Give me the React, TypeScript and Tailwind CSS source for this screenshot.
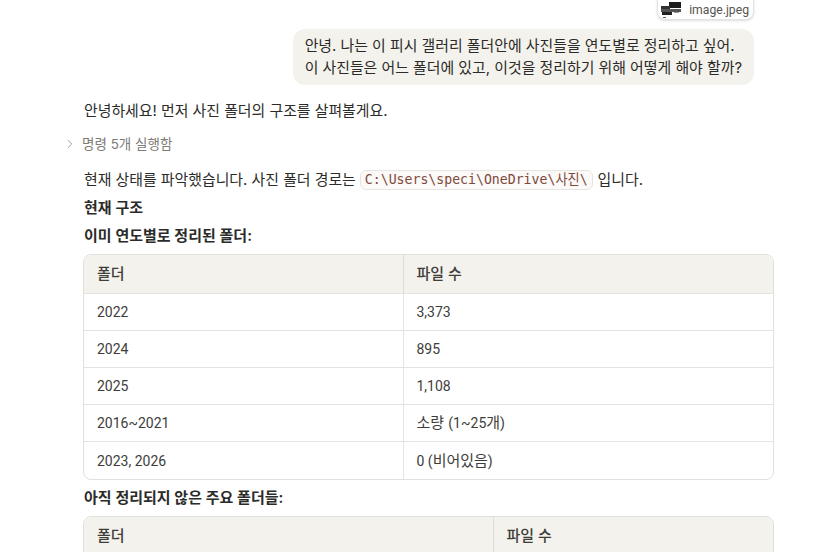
import React from 'react';
import { ChevronRight } from 'lucide-react';

const fontSans = 'font-["Inter","Noto_Sans_CJK_KR",sans-serif]';

// numbers in the reference run narrower than the hangul next to them
const Num: React.FC<{ children: React.ReactNode }> = ({ children }) => (
  <span className="font-['Roboto'] text-[14px]">{children}</span>
);

const FolderTable: React.FC<{ rows: React.ReactNode[][]; firstCol: string }> = ({ rows, firstCol }) => (
  <div className="rounded-lg border border-[#e1e0dc] overflow-hidden">
    <table className="w-full border-collapse table-fixed text-[15px] leading-[20px]">
      <colgroup>
        <col className={firstCol} />
        <col />
      </colgroup>
      <thead>
        <tr className="h-[38px] bg-[#f4f2ec] text-[#3d3d3a]">
          <th className="pl-[13px] pr-3 text-left font-medium">폴더</th>
          <th className="pl-[13px] pr-3 text-left font-medium border-l border-[#dddcd7]">파일 수</th>
        </tr>
      </thead>
      <tbody>
        {rows.map((row, i) => (
          <tr key={i} className="h-[37.2px] border-t border-[#e4e3df] text-[#3d3d3a]">
            <td className="pl-[13px] pr-3">{row[0]}</td>
            <td className="pl-[13px] pr-3 border-l border-[#e4e3df]">{row[1]}</td>
          </tr>
        ))}
      </tbody>
    </table>
  </div>
);

const Thumb = () => (
  <svg width="22" height="18" viewBox="0 0 22 18">
    <rect x="9" y="1" width="12" height="6" fill="#1c1c1c" />
    <rect x="1" y="5" width="9" height="3" fill="#333" />
    <rect x="1" y="8" width="20" height="3" fill="#555" />
    <rect x="2" y="11" width="10" height="3" fill="#222" />
    <rect x="14" y="11" width="5" height="1" fill="#999" />
    <rect x="3" y="16" width="3" height="1" fill="#666" />
  </svg>
);

export default function App() {
  const rows = [
    [<Num>2022</Num>, <Num>3,373</Num>],
    [<Num>2024</Num>, <Num>895</Num>],
    [<Num>2025</Num>, <Num>1,108</Num>],
    [<Num>2016~2021</Num>, <>소량 <Num>(1~25</Num>개<Num>)</Num></>],
    [<Num>2023, 2026</Num>, <><Num>0 (</Num>비어있음<Num>)</Num></>],
  ];

  return (
    <div className={`h-[552px] w-[836px] overflow-hidden bg-white text-[#2b2b29] ${fontSans}`}>
      <div className="ml-[83px] w-[691px]">
        <div className="flex flex-col items-end pr-5">
          <div className="-mt-2 flex h-7 items-center gap-[7px] rounded-lg border border-[#e4e3df] bg-white pl-0.5 pr-1 pt-2 shadow-sm">
            <Thumb />
            <span className="font-['Roboto'] text-[12.2px] text-[#55554f]">image.jpeg</span>
          </div>
          <div className="mt-[9px] rounded-xl bg-[#f4f2ec] px-3 py-[6px] text-[14.9px] leading-[22px]">
            <p>안녕. 나는 이 피시 갤러리 폴더안에 사진들을 연도별로 정리하고 싶어.</p>
            <p>이 사진들은 어느 폴더에 있고, 이것을 정리하기 위해 어떻게 해야 할까?</p>
          </div>
        </div>

        <p className="mt-[15px] pl-px text-[14.9px] leading-[22px]">안녕하세요! 먼저 사진 폴더의 구조를 살펴볼게요.</p>

        <div className="-ml-[20px] mt-[12px] flex items-center gap-[5px] text-[13.5px] leading-[20px] text-[#7d7c76]">
          <ChevronRight size={14} strokeWidth={1.25} />
          <span>명령 5개 실행함</span>
        </div>

        <p className="mt-[15px] flex items-center pl-px text-[14.9px] leading-[22px]">
          현재 상태를 파악했습니다. 사진 폴더 경로는
          <code className="mx-[4px] rounded-md border border-[#e6e5e0] bg-[#fbfaf8] px-1 font-['DejaVu_Sans_Mono','Noto_Sans_CJK_KR',monospace] text-[13.2px] leading-[18px] text-[#80493c]">
            C:\Users\speci\OneDrive\사진\
          </code>
          <span className="pl-px">입니다.</span>
        </p>
        <p className="mt-[6px] pl-px text-[15px] font-semibold leading-[22px]">현재 구조</p>
        <p className="mt-[6px] mb-[7px] pl-px text-[15px] font-semibold leading-[22px]">이미 연도별로 정리된 폴더:</p>

        <FolderTable rows={rows} firstCol="w-[319px]" />

        <p className="mt-[7px] mb-[7px] pl-px text-[15px] font-semibold leading-[22px]">아직 정리되지 않은 주요 폴더들:</p>

        <FolderTable rows={[['-', '-']]} firstCol="w-[409px]" />
      </div>
    </div>
  );
}
